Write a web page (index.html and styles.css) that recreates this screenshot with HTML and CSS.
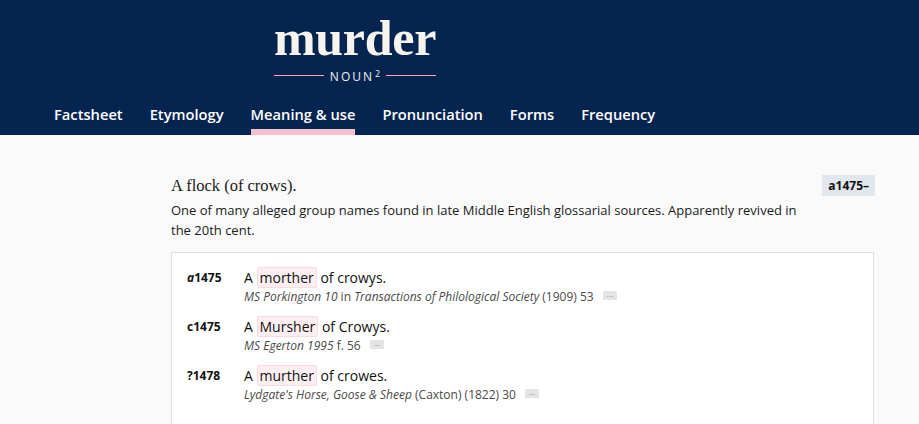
FILE: index.html
```html
<!DOCTYPE html>
<html lang="en">
<head>
<meta charset="utf-8">
<title>murder, n.2</title>
<link rel="stylesheet" href="styles.css">
</head>
<body>
<header class="header">
  <div class="brand">
    <h1 class="headword">murder</h1>
    <div class="pos">
      <span class="pos-line"></span>
      <span class="pos-text">NOUN<sup>2</sup></span>
      <span class="pos-line"></span>
    </div>
  </div>
  <nav class="nav">
    <a class="nav-item">Factsheet</a>
    <a class="nav-item">Etymology</a>
    <a class="nav-item active">Meaning &amp; use</a>
    <a class="nav-item">Pronunciation</a>
    <a class="nav-item">Forms</a>
    <a class="nav-item">Frequency</a>
  </nav>
</header>
<main class="main">
  <div class="sense">
    <div class="sense-head">
      <p class="definition">A flock (of crows).</p>
      <span class="date-badge">a1475–</span>
    </div>
    <p class="note">One of many alleged group names found in late Middle English glossarial sources. Apparently revived in the 20th cent.</p>
    <div class="quotes">
      <div class="quote">
        <div class="qdate"><i>a</i>1475</div>
        <div class="qbody">
          <div class="qtext">A <mark class="hl">morther</mark> of crowys.</div>
          <div class="qcite"><i>MS Porkington 10</i> in <i>Transactions of Philological Society</i> (1909) 53 <span class="more">···</span></div>
        </div>
      </div>
      <div class="quote">
        <div class="qdate">c1475</div>
        <div class="qbody">
          <div class="qtext">A <mark class="hl">Mursher</mark> of Crowys.</div>
          <div class="qcite"><i>MS Egerton 1995</i> f. 56 <span class="more">···</span></div>
        </div>
      </div>
      <div class="quote">
        <div class="qdate">?1478</div>
        <div class="qbody">
          <div class="qtext">A <mark class="hl">murther</mark> of crowes.</div>
          <div class="qcite"><i>Lydgate's Horse, Goose &amp; Sheep</i> (Caxton) (1822) 30 <span class="more">···</span></div>
        </div>
      </div>
    </div>
  </div>
</main>
</body>
</html>
```

FILE: styles.css
```css
* { box-sizing: border-box; }
html, body { margin: 0; padding: 0; }
body {
  background: #fafafa;
  font-family: "Open Sans", "Noto Sans", sans-serif;
  color: #1a1a1a;
  overflow: hidden;
  height: 424px;
}
.header {
  background: #05244f;
  height: 135px;
  display: flex;
  flex-direction: column;
}
.brand {
  padding-left: 274px;
  padding-top: 10px;
  display: flex;
  flex-direction: column;
  width: calc(274px + 162px);
}
.headword {
  margin: 0;
  font-family: "Liberation Serif", "Times New Roman", serif;
  font-weight: 700;
  font-size: 50px;
  line-height: 56px;
  color: #f7f4ef;
  text-align: center;
  letter-spacing: -0.3px;
}
.pos {
  display: flex;
  align-items: center;
  gap: 5px;
  height: 18px;
}
.pos-line {
  flex: 1;
  height: 1px;
  background: #f2a7b8;
}
.pos-text {
  color: #f0eef0;
  font-size: 12px;
  letter-spacing: 2px;
  line-height: 14px;
  padding: 0 1px;
}
.pos-text sup {
  font-size: 9px;
  letter-spacing: 0;
  vertical-align: 4px;
  margin-left: 1px;
}
.nav {
  display: flex;
  gap: 27px;
  padding-left: 54px;
  margin-top: auto;
}
.nav-item {
  color: #ffffff;
  font-weight: 600;
  font-size: 14.7px;
  line-height: 20px;
  padding: 9px 0 5px;
  border-bottom: 6px solid transparent;
}
.nav-item.active {
  border-bottom-color: #f5bfcb;
}
.main {
  padding: 40px 45px 0 171px;
}
.sense {
  width: 703px;
}
.sense-head {
  display: flex;
  justify-content: space-between;
  align-items: flex-start;
}
.definition {
  margin: 0;
  padding-top: 1px;
  font-family: "Liberation Serif", "Times New Roman", serif;
  font-size: 16.5px;
  line-height: 20px;
  color: #1a1a1a;
}
.date-badge {
  background: #e2e6ed;
  font-weight: 700;
  font-size: 12px;
  line-height: 21px;
  padding: 0 6px;
  color: #111;
  margin-right: -1px;
}
.note {
  margin: 5px 0 0;
  max-width: 636px;
  font-size: 13px;
  line-height: 19.5px;
  color: #1a1a1a;
}
.quotes {
  margin-top: 12px;
  background: #ffffff;
  border: 1px solid #dcdfe5;
  border-bottom: none;
  padding: 14px 16px 0 15px;
  height: 173px;
  display: flex;
  flex-direction: column;
  gap: 12px;
}
.quote {
  display: flex;
}
.qdate {
  width: 57px;
  font-weight: 700;
  font-size: 12px;
  line-height: 22px;
  color: #111;
}
.qbody {
  display: flex;
  flex-direction: column;
}
.qtext {
  font-size: 14px;
  line-height: 22px;
  color: #111;
}
.hl {
  background: #fdeef1;
  border: 1px solid #f8dbe1;
  border-radius: 2px;
  padding: 0 2px;
  color: inherit;
}
.qcite {
  font-size: 12px;
  line-height: 15px;
  color: #4a4a4a;
}
.qcite i { font-style: italic; }
.more {
  display: inline-block;
  background: #e4e4e4;
  color: #777;
  font-size: 8px;
  line-height: 9px;
  height: 9px;
  padding: 0 4px;
  margin-left: 6px;
  vertical-align: 2px;
  border-radius: 1px;
  letter-spacing: 0;
}
```
